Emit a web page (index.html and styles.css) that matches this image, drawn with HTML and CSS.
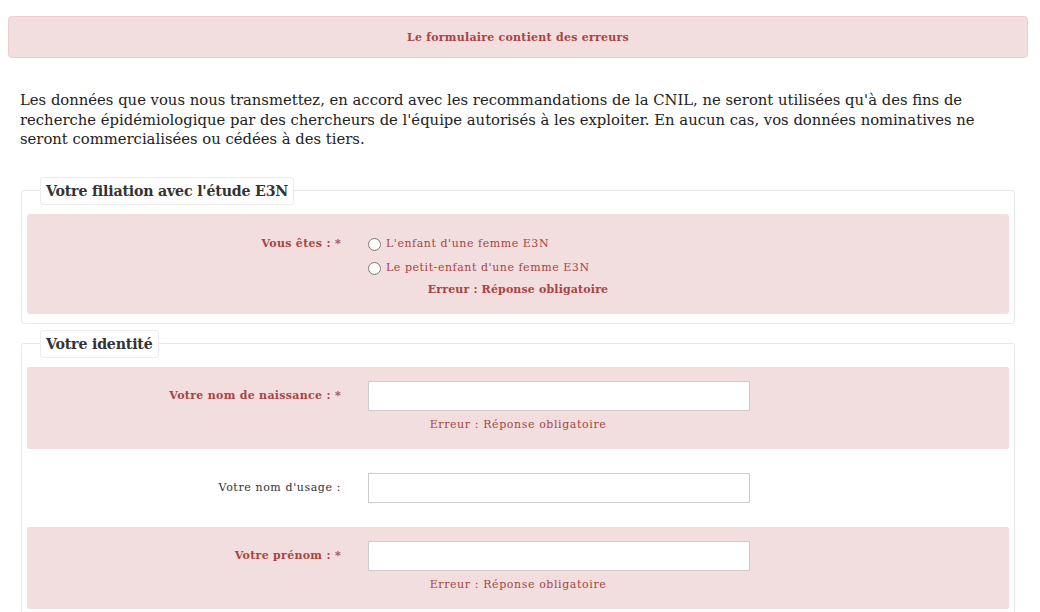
FILE: index.html
```html
<!DOCTYPE html>
<html lang="fr">
<head>
<meta charset="utf-8">
<title>Formulaire E3N</title>
<link rel="stylesheet" href="styles.css">
</head>
<body>
<div class="page">
  <div class="alert">Le formulaire contient des erreurs</div>

  <p class="intro">Les données que vous nous transmettez, en accord avec les recommandations de la CNIL, ne seront utilisées qu'à des fins de recherche épidémiologique par des chercheurs de l'équipe autorisés à les exploiter. En aucun cas, vos données nominatives ne seront commercialisées ou cédées à des tiers.</p>

  <fieldset class="group">
    <legend>Votre filiation avec l'étude E3N</legend>
    <div class="row has-error row-radio">
      <label class="row-label">Vous êtes : *</label>
      <div class="row-field">
        <label class="radio"><input type="radio" name="filiation"> L'enfant d'une femme E3N</label>
        <label class="radio"><input type="radio" name="filiation"> Le petit-enfant d'une femme E3N</label>
        <div class="help help-bold">Erreur : Réponse obligatoire</div>
      </div>
    </div>
  </fieldset>

  <fieldset class="group">
    <legend>Votre identité</legend>
    <div class="row has-error">
      <label class="row-label">Votre nom de naissance : *</label>
      <div class="row-field">
        <input class="text-input" type="text">
        <div class="help">Erreur : Réponse obligatoire</div>
      </div>
    </div>
    <div class="row">
      <label class="row-label">Votre nom d'usage :</label>
      <div class="row-field">
        <input class="text-input" type="text">
      </div>
    </div>
    <div class="row has-error">
      <label class="row-label">Votre prénom : *</label>
      <div class="row-field">
        <input class="text-input" type="text">
        <div class="help">Erreur : Réponse obligatoire</div>
      </div>
    </div>
  </fieldset>
</div>
</body>
</html>
```

FILE: styles.css
```css
* { box-sizing: border-box; }

body {
  margin: 8px;
  font-family: "DejaVu Serif", "Liberation Serif", serif;
  color: #222;
  background: #fff;
}

.page {
  width: 1020px;
  padding-top: 8px;
}

.alert {
  height: 42px;
  background: #f2dede;
  border: 1px solid #ebccd1;
  border-radius: 4px;
  color: #a94442;
  font-weight: bold;
  font-size: 11px;
  display: flex;
  align-items: center;
  justify-content: center;
  letter-spacing: 0.25px;
}

.intro {
  margin: 32px 0 0 12px;
  font-size: 14.8px;
  line-height: 19.5px;
  width: 975px;
}

.group {
  margin: 28px 13px 0 13px;
  padding: 9px 5px 9px 5px;
  border: 1px solid #e8e8e8;
  border-radius: 3px;
}

.group + .group { margin-top: 6px; }

.group legend {
  margin-left: 13px;
  padding: 0 5px;
  height: 28px;
  line-height: 26px;
  border: 1px solid #ececec;
  border-radius: 3px;
  background: #fff;
  font-weight: bold;
  font-size: 14.2px;
  letter-spacing: -0.2px;
  color: #333;
}

.row {
  display: grid;
  grid-template-columns: 329px 1fr;
  column-gap: 12px;
  padding: 14px 0;
  margin: 10px 0;
  border-radius: 3px;
  font-size: 11px;
}
.row:first-of-type { margin-top: 0; }
.row:last-child { margin-bottom: 0; }

.row.has-error {
  background: #f2dede;
}

.row-label {
  text-align: right;
  padding-right: 15px;
  line-height: 30px;
  color: #333;
  letter-spacing: 0.6px;
}
.has-error .row-label {
  color: #a94442;
  font-weight: bold;
  letter-spacing: 0.3px;
}

.row.row-radio { padding: 18px 0 14px; }
.row-radio .row-label { line-height: 24px; }

.radio {
  display: flex;
  align-items: center;
  height: 24px;
  color: #a94442;
  letter-spacing: 0.55px;
}
.radio input {
  margin: 1px 5px 0 0;
  width: 13px;
  height: 13px;
}

.text-input {
  display: block;
  width: 382px;
  height: 30px;
  border: 1px solid #ccc;
  border-radius: 0;
  background: #fff;
}

.help {
  width: 300px;
  text-align: center;
  color: #a94442;
  line-height: 20px;
  margin-top: 4px;
  letter-spacing: 0.6px;
}
.help-bold {
  font-weight: bold;
  margin-top: 0;
  letter-spacing: 0.15px;
}
```
